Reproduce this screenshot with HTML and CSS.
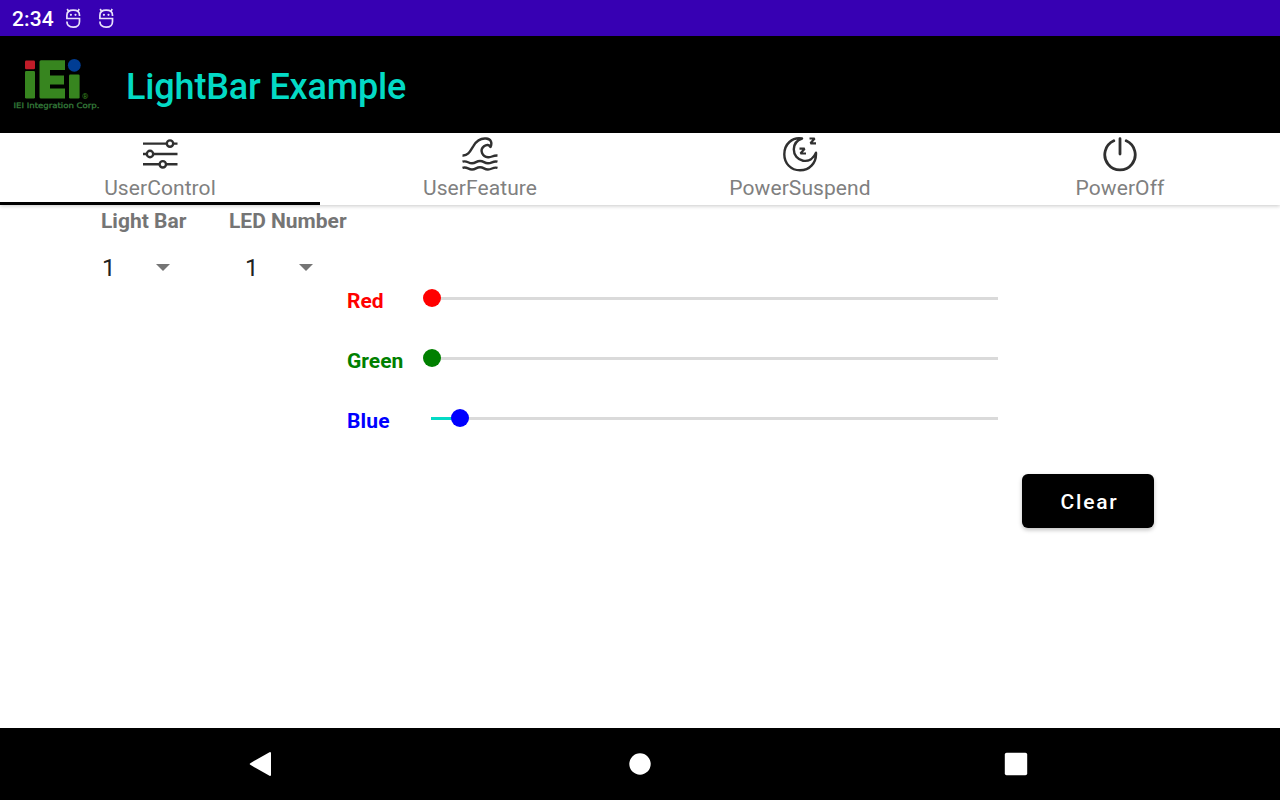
FILE: index.html
```html
<!DOCTYPE html>
<html lang="en">
<head>
<meta charset="utf-8">
<title>LightBar Example</title>
<link rel="stylesheet" href="styles.css">
</head>
<body>
<div class="screen">
  <div class="status">
    <span class="clock">2:34</span>
    <svg class="bug" viewBox="0 0 18 22"><use href="#bug"/></svg>
    <svg class="bug" viewBox="0 0 18 22"><use href="#bug"/></svg>
  </div>
  <header class="header">
    <svg class="logo" viewBox="0 0 90 54">
      <rect x="12" y="2.500" width="10" height="8.800" rx="1.200" fill="#c01c28"/>
      <rect x="12" y="13" width="10" height="27.500" rx="1.200" fill="#37851f"/>
      <path d="M28 2.300H52V12H37V17.500H51V26.500H37V30.500H52V40.500H28Q26.500 40.500 26.500 39V3.800Q26.500 2.300 28 2.300Z" fill="#37851f"/>
      <circle cx="61.300" cy="7.300" r="6.400" fill="#003d94"/>
      <rect x="56" y="16.500" width="10.600" height="24" rx="1.200" fill="#37851f"/>
      <text class="reg" x="69" y="41">®</text>
      <text class="corp" x="0.500" y="50" textLength="86" lengthAdjust="spacingAndGlyphs">IEI Integration Corp.</text>
    </svg>
    <h1 class="title">LightBar Example</h1>
  </header>
  <nav class="tabs">
    <div class="tab active">
      <svg class="icon" viewBox="0 0 36 36"><path d="M1 7.600H25M31 7.600H35.500M1 18H5M11 18H35.500M1 28.300H17M24 28.300H35.500"/><circle cx="28" cy="7.600" r="3.200"/><circle cx="8" cy="18" r="3.200"/><circle cx="20.800" cy="28.300" r="3.200"/></svg>
      <span>UserControl</span>
    </div>
    <div class="tab">
      <svg class="icon" viewBox="0 0 36 36"><path d="M.5 19.500C6.500 20 8.500 14.500 11.500 9.800C15 4 20 2.100 24 2.500C29 3 30.500 6.300 28.500 11C27.500 8.500 24.500 8.300 22 10.200C17 14.200 20.500 20.500 26 21.200C30 21.700 30 19.300 35.500 19.500M.5 25.700C5 24.200 6 27.300 10 27.300C14 27.300 14 25 18 25C22 25 22 27.300 26 27.300C30 27.300 31 24.500 35.500 25.700M.5 31.900C5 30.400 6 33.500 10 33.500C14 33.500 14 31.200 18 31.200C22 31.200 22 33.500 26 33.500C30 33.500 31 30.700 35.500 31.900"/></svg>
      <span>UserFeature</span>
    </div>
    <div class="tab">
      <svg class="icon" viewBox="0 0 36 36"><path d="M20 2.500C10 .8 2.300 8.300 2.300 18.200C2.300 27.500 9 34.300 18 34.300C27.500 34.300 34.500 27 34 16.800C31.500 22.800 26.500 25.700 21 24.700C15.500 23.700 11.800 19.200 11.800 13.300C11.800 8.300 15 4.300 20 2.500Z"/><path class="zed" d="M27.500 2.500H32.600L28.500 7.300H34M17.500 12.700H22.600L18.500 17.500H24"/></svg>
      <span>PowerSuspend</span>
    </div>
    <div class="tab">
      <svg class="icon" viewBox="0 0 36 36"><path class="power" d="M18 2.700V18M11.800 4.800A15.200 15.200 0 1 0 24.200 4.800"/></svg>
      <span>PowerOff</span>
    </div>
  </nav>
  <main class="content">
    <div class="selectors">
      <div class="field bar"><strong>Light Bar</strong><div class="spinner"><span>1</span><i></i></div></div>
      <div class="field led"><strong>LED Number</strong><div class="spinner"><span>1</span><i></i></div></div>
    </div>
    <div class="sliders">
      <div class="row red"><strong>Red</strong><div class="track"><b class="thumb"></b></div></div>
      <div class="row green"><strong>Green</strong><div class="track"><b class="thumb"></b></div></div>
      <div class="row blue"><strong>Blue</strong><div class="track"><b class="fill"></b><b class="thumb"></b></div></div>
    </div>
    <button class="clear">Clear</button>
  </main>
  <footer class="navbar">
    <svg viewBox="0 0 30 30"><path d="M1.800 15L21 4V26Z" fill="#fff" stroke="#fff" stroke-width="2" stroke-linejoin="round"/></svg>
    <svg viewBox="0 0 30 30"><circle cx="15" cy="15" r="10.700" fill="#fff"/></svg>
    <svg viewBox="0 0 30 30"><rect x="3.800" y="3.800" width="22.400" height="22.400" rx="1.800" fill="#fff"/></svg>
  </footer>
</div>
<svg class="defs">
  <symbol id="bug" viewBox="0 0 18 22">
    <path d="M15.500 9V8.200C15.500 5 13 3.200 9.200 3.200S2.900 5 2.900 8.200V11.500H15.500V14.500C15.500 18.200 13 20.200 9.200 20.200S2.900 18.200 2.900 14.600M4.800 4.800L3.200 2M13.600 4.800L15.200 2" fill="none" stroke="#e8e0fa" stroke-width="1.700"/>
    <circle cx="6.900" cy="7.800" r="1.100" fill="#e8e0fa"/><circle cx="11.500" cy="7.800" r="1.100" fill="#e8e0fa"/>
  </symbol>
</svg>
</body>
</html>
```
FILE: styles.css
```css
* { box-sizing: border-box; }
body { margin: 0; font-family: Roboto, sans-serif; }
.defs { display: none; }
.screen { width: 1280px; height: 800px; display: flex; flex-direction: column; background: #fff; overflow: hidden; }
.status { height: 36px; flex: none; background: #3700b3; color: #fff; display: flex; align-items: center; padding-left: 12px; }
.clock { width: 52px; font-size: 21px; font-weight: 500; line-height: 36px; padding-top: 1px; letter-spacing: .15px; }
.bug { width: 18px; height: 22px; margin-right: 15px; }
.header { height: 97px; flex: none; background: #000; display: flex; padding-left: 13px; }
.logo { width: 90px; height: 54px; margin-top: 22px; }
.reg { font: 8px Roboto, sans-serif; fill: #37851f; }
.corp { font: 7.5px "DejaVu Sans", sans-serif; fill: #347b3a; stroke: #347b3a; stroke-width: .3; }
.title { margin: 0 0 0 23px; font-size: 36px; font-weight: 500; line-height: 42px; padding-top: 30px; color: #03dac5; white-space: nowrap; letter-spacing: -.16px; }
.tabs { height: 72px; flex: none; display: grid; grid-template-columns: repeat(4, 1fr); background: #fff; box-shadow: 0 1px 4px rgba(0,0,0,.22); }
.tab { display: flex; flex-direction: column; align-items: center; padding-top: 3px; font-size: 21px; line-height: 25px; color: #808080; letter-spacing: .08px; }
.tab span { margin-top: 4px; }
.active { border-bottom: 3px solid #000; }
.icon { width: 36px; height: 36px; flex: none; fill: none; stroke: #303030; stroke-width: 2.4; stroke-linejoin: round; }
.zed { stroke-width: 2.2; stroke-linejoin: miter; stroke-miterlimit: 2; }
.power { stroke-width: 2.8; stroke-linecap: round; }
.content { flex: 1; }
.selectors { display: flex; height: 78px; padding-left: 101px; }
.field { font-size: 21px; line-height: 25px; color: #757575; padding-top: 4px; }
.bar { width: 128px; }
.bar .spinner { padding-left: 1px; }
.led .spinner { padding-left: 16px; }
.spinner { display: flex; align-items: center; height: 45px; margin-top: 11px; color: #212121; font-size: 24px; }
.spinner span { width: 54px; padding-top: 2px; }
.spinner i { border: 7.5px solid transparent; border-bottom: 0; border-top-color: #757575; }
.sliders { padding-left: 347px; }
.row { display: flex; height: 60px; font-size: 21px; line-height: 25px; padding-top: 6px; }
.row strong { width: 84px; }
.track { position: relative; width: 567px; height: 3px; margin-top: 8px; background: #dadada; }
.thumb { position: absolute; left: -8.5px; top: -8px; width: 18px; height: 18px; border-radius: 50%; background: currentColor; }
.fill { display: block; width: 28px; height: 3px; background: #03dac5; }
.red { color: #f00; }
.green { color: #008000; }
.blue { color: #00f; }
.blue strong { letter-spacing: .2px; }
.blue .thumb { left: 19.5px; }
.clear { display: block; width: 132px; height: 54px; margin: 11px 0 0 1022px; padding: 2px 0 0 3px; border: 0; border-radius: 6px; background: #000; color: #fff; font: 500 21px Roboto, sans-serif; letter-spacing: 1.8px; box-shadow: 0 2px 4px rgba(0,0,0,.25); }
.navbar { height: 72px; flex: none; background: #000; display: flex; align-items: center; justify-content: center; gap: 346px; }
.navbar svg { width: 30px; height: 30px; }
```
